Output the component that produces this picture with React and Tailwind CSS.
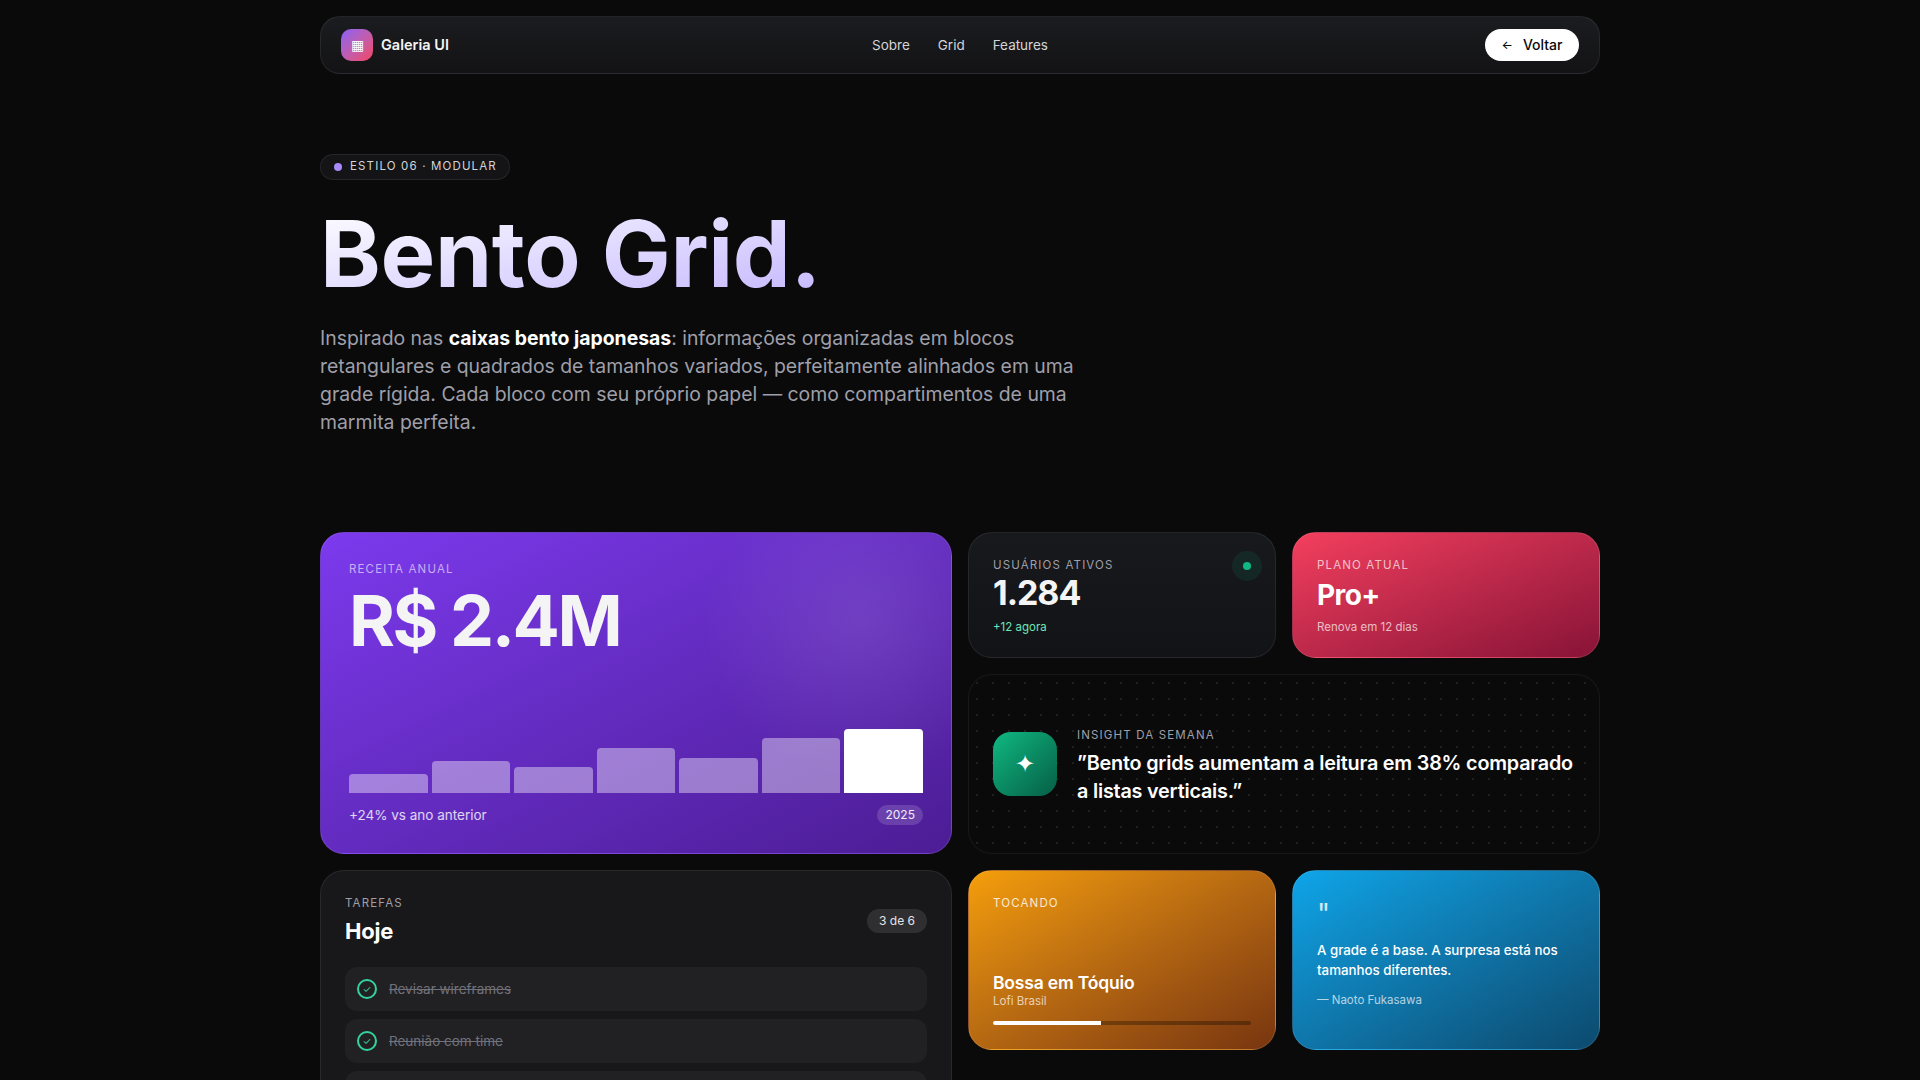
const bars = [
  { h: 'h-[30%]' },
  { h: 'h-[50%]' },
  { h: 'h-[40%]' },
  { h: 'h-[70%]' },
  { h: 'h-[55%]' },
  { h: 'h-[85%]' },
  { h: 'h-full', active: true },
]

const tasks = [
  { label: 'Revisar wireframes', done: true },
  { label: 'Reunião com time', done: true },
  { label: 'Enviar proposta', done: true },
  { label: 'Atualizar protótipo' },
  { label: 'Testes com usuários' },
  { label: 'Publicar release' },
]

function Label({ className = '', children }) {
  return <div className={`text-[11.5px] leading-4 tracking-[0.1em] uppercase ${className}`}>{children}</div>
}

function Task({ label, done }) {
  return (
    <div className="h-11 flex items-center gap-3 px-3 rounded-xl bg-white/[0.04]">
      <span className={`w-5 h-5 rounded-full border-2 flex items-center justify-center text-[10px] leading-none ${done ? 'border-[#34d399] text-[#34d399]' : 'border-zinc-600'}`}>
        {done ? '✓' : ''}
      </span>
      <span className={`text-[13.5px] ${done ? 'line-through text-zinc-500' : 'text-zinc-200'}`}>{label}</span>
    </div>
  )
}

export default function App() {
  return (
    <div className="h-screen overflow-y-scroll [color-scheme:dark] bg-[#0a0a0a] text-white font-['Inter',sans-serif]">
      <div className="max-w-[1280px] mx-auto pt-4 pb-[240px]">
        {/* Nav */}
        <nav className="h-[58px] flex items-center justify-between px-5 rounded-[20px] border border-white/[0.07] bg-gradient-to-b from-[#1b1c1f] to-[#131316]">
          <div className="w-[200px] flex items-center gap-2">
            <div className="w-8 h-8 rounded-[10px] bg-gradient-to-br from-[#8b5cf6] to-[#f43f5e] flex items-center justify-center text-sm text-white">▦</div>
            <span className="text-[14.5px] font-semibold text-zinc-100">Galeria UI</span>
          </div>
          <div className="flex items-center gap-7 text-[13.5px] text-zinc-300">
            <span>Sobre</span>
            <span>Grid</span>
            <span>Features</span>
          </div>
          <div className="w-[200px] flex justify-end">
            <button className="h-8 w-[94px] flex items-center justify-center gap-2.5 rounded-full bg-white text-[#0a0a0a] text-sm font-medium">
              <span className="text-xs">←</span> Voltar
            </button>
          </div>
        </nav>

        {/* Hero */}
        <section className="mt-20">
          <div className="h-[26px] w-[190px] flex items-center gap-2 pl-[13px] rounded-full border border-white/[0.08] bg-[#141417]">
            <span className="w-2 h-2 rounded-full bg-[#a78bfa]" />
            <span className="text-[11.5px] tracking-[0.1em] text-zinc-300 whitespace-nowrap">ESTILO 06 · MODULAR</span>
          </div>
          <h1 className="mt-[22px] text-[92px] leading-[104px] font-bold tracking-[-0.004em] w-fit bg-gradient-to-br from-white to-[#c4b5fd] bg-clip-text text-transparent">
            Bento Grid.
          </h1>
          <p className="mt-[18px] max-w-[780px] text-[19.4px] leading-7 text-zinc-400">
            Inspirado nas <strong className="font-bold text-white">caixas bento japonesas</strong>: informações organizadas em blocos retangulares e quadrados de tamanhos variados, perfeitamente alinhados em uma grade rígida. Cada bloco com seu próprio papel — como compartimentos de uma marmita perfeita.
          </p>
        </section>

        {/* Bento */}
        <section className="mt-[96px] grid grid-cols-4 gap-4 grid-rows-[126px_180px_180px_auto]">
          <div className="relative col-span-2 row-span-2 p-7 flex flex-col rounded-3xl border border-white/10 overflow-hidden bg-gradient-to-br from-[#7c3aed] to-[#4c1d95]">
            <div className="absolute -top-[70px] -right-[70px] w-[320px] h-[320px] rounded-full bg-[radial-gradient(circle,rgba(255,255,255,0.1),transparent_70%)]" />
            <Label className="text-white/60">Receita Anual</Label>
            <div className="mt-1.5 text-[70px] leading-[76px] font-bold tracking-[-0.035em] text-zinc-100">R$ 2.4M</div>
            <div className="mt-auto h-16 flex items-end gap-1">
              {bars.map((b, i) => (
                <div key={i} className={`flex-1 rounded-t-[4px] ${b.h} ${b.active ? 'bg-white' : 'bg-white/40'}`} />
              ))}
            </div>
            <div className="mt-3 flex items-center justify-between">
              <span className="text-[13.5px] text-white/80">+24% vs ano anterior</span>
              <span className="h-5 px-2 flex items-center rounded-full bg-white/15 text-xs text-white/90">2025</span>
            </div>
          </div>

          <div className="relative p-6 rounded-3xl border border-white/[0.07] bg-gradient-to-b from-[#18191c] to-[#121316]">
            <div className="absolute top-[18px] right-[13px] w-[30px] h-[30px] rounded-full bg-[#10b981]/10 flex items-center justify-center">
              <span className="w-2 h-2 rounded-full bg-[#10b981]" />
            </div>
            <Label className="text-zinc-400">Usuários Ativos</Label>
            <div className="text-[34px] leading-10 font-bold tracking-[-0.03em] text-zinc-100">1.284</div>
            <div className="mt-1.5 text-[11.5px] leading-4 text-[#6ee7b7]">+12 agora</div>
          </div>

          <div className="p-6 rounded-3xl border border-white/10 bg-gradient-to-br from-[#f43f5e] to-[#881337]">
            <Label className="text-white/70">Plano Atual</Label>
            <div className="mt-1 text-[28px] leading-9 font-bold tracking-[-0.02em]">Pro+</div>
            <div className="mt-1.5 text-[11.5px] leading-4 text-white/70">Renova em 12 dias</div>
          </div>

          <div className="col-span-2 px-6 flex items-center gap-5 rounded-3xl border border-white/[0.06] bg-[radial-gradient(rgba(255,255,255,0.09)_1px,transparent_1px)] bg-[size:16px_16px]">
            <div className="w-16 h-16 shrink-0 rounded-[18px] bg-gradient-to-br from-[#10b981] to-[#065f46] flex items-center justify-center text-2xl">✦</div>
            <div className="pt-1">
              <Label className="text-zinc-400">Insight da Semana</Label>
              <div className="mt-1.5 text-[19.8px] leading-7 font-semibold tracking-[-0.01em]">”Bento grids aumentam a leitura em 38% comparado a listas verticais.”</div>
            </div>
          </div>

          <div className="col-span-2 row-span-2 self-start p-6 rounded-3xl border border-white/[0.07] bg-[#18181b]">
            <div className="flex items-center justify-between">
              <div>
                <Label className="text-zinc-400">Tarefas</Label>
                <div className="mt-1 text-[22px] leading-8 font-bold tracking-[-0.01em]">Hoje</div>
              </div>
              <span className="h-6 px-3 flex items-center rounded-full bg-white/10 text-xs text-zinc-200">3 de 6</span>
            </div>
            <div className="mt-5 flex flex-col gap-2">
              {tasks.map(t => <Task key={t.label} {...t} />)}
            </div>
          </div>

          <div className="p-6 flex flex-col rounded-3xl border border-white/10 bg-gradient-to-br from-[#f59e0b] to-[#78350f]">
            <Label className="text-white/80">Tocando</Label>
            <div className="mt-auto text-[17.5px] leading-5 font-semibold tracking-[-0.01em]">Bossa em Tóquio</div>
            <div className="text-[11.5px] leading-4 text-white/70">Lofi Brasil</div>
            <div className="mt-3 h-1 rounded-full bg-black/30 overflow-hidden">
              <div className="h-full w-[42%] bg-white" />
            </div>
          </div>

          <div className="px-6 pt-[27px] rounded-3xl border border-white/10 bg-gradient-to-br from-[#0ea5e9] to-[#0c4a6e]">
            <div className="h-8 text-[28px] leading-8 text-white/80">"</div>
            <div className="mt-2.5 text-[13.3px] leading-5 font-medium">A grade é a base. A surpresa está nos tamanhos diferentes.</div>
            <div className="mt-3 text-[11.5px] leading-4 text-white/70">— Naoto Fukasawa</div>
          </div>
        </section>
      </div>
    </div>
  )
}
